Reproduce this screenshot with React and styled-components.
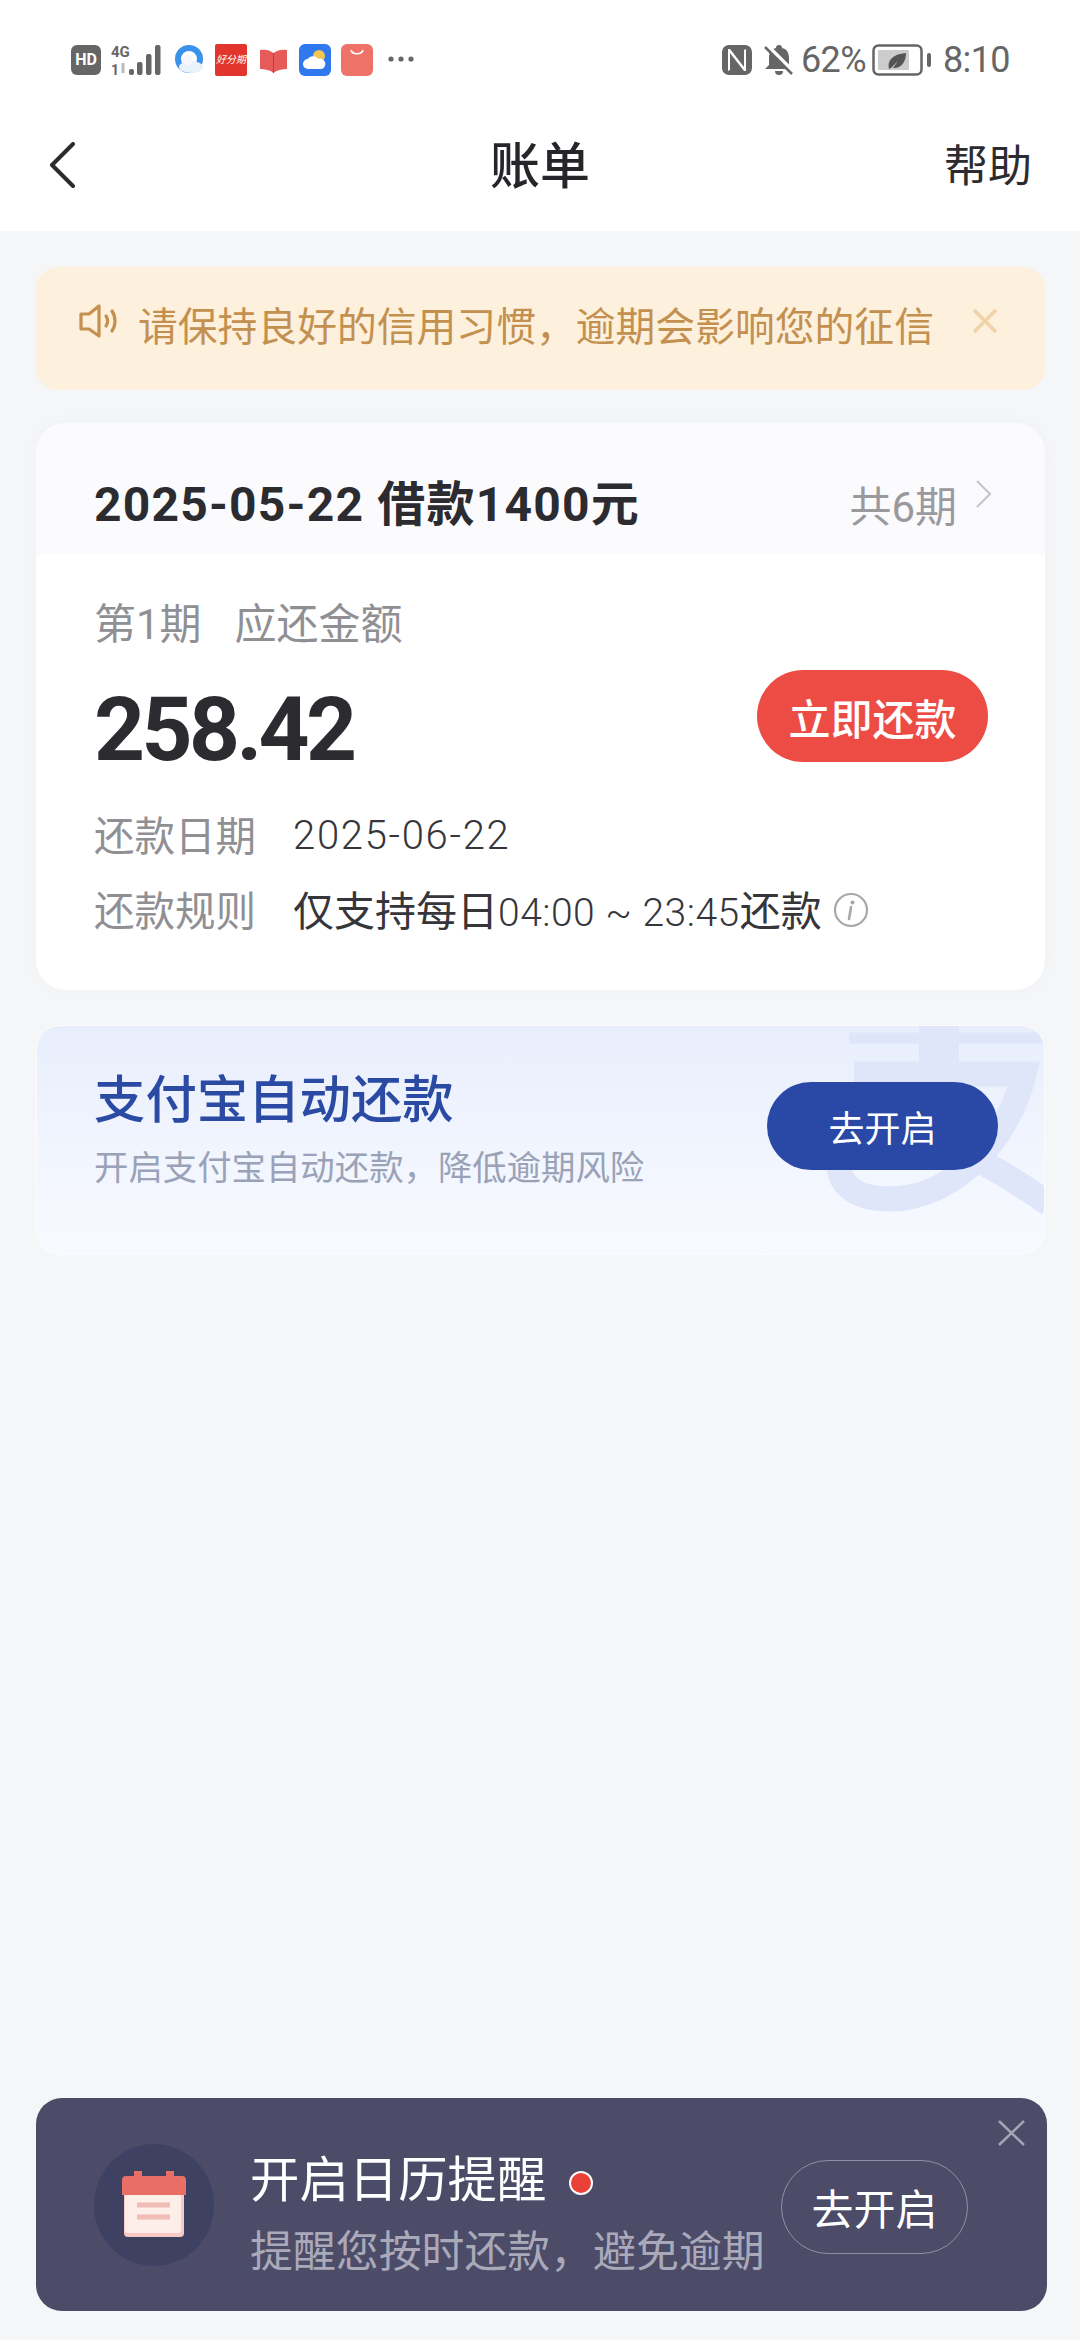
import React from "react";
import styled, { createGlobalStyle } from "styled-components";

const Global = createGlobalStyle`
  html, body { margin: 0; padding: 0; background: #f5f6f8; }
  * { box-sizing: border-box; }
`;
const CJK = `"Roboto", "Noto Sans CJK SC", sans-serif`;

const Page = styled.div`
  width: 1080px; height: 2340px; display: flex; flex-direction: column;
  background: #f5f6f8; font-family: ${CJK}; overflow: hidden;
`;
const Header = styled.header`background: #fff; height: 231px; display: flex; flex-direction: column;`;
const StatusBar = styled.div`
  height: 85px; padding: 44px 70px 0 71px; display: flex; justify-content: space-between; align-items: flex-start;
`;
const StatusGroup = styled.div`display: flex; align-items: center; height: 32px;`;
const StatusText = styled.span`
  font-size: 36px; line-height: 32px; color: #666; margin-left: ${p => p.$ml || 0}px; white-space: nowrap; letter-spacing: -.6px;
`;
const Svg = styled.svg`display: block; flex: none; margin-left: ${p => p.$ml || 0}px;`;
const HdBadge = styled.div`
  width: 30px; height: 30px; flex: none; border-radius: 6px; background: #666; color: #fff; font-size: 16px; font-weight: 700;
  line-height: 30px; text-align: center;
`;
const RedTile = styled.div`
  width: 32px; height: 32px; margin-left: 11px; background: #e2352c; color: #fff; font-size: 10px; font-style: italic;
  line-height: 32px; text-align: center; white-space: nowrap; overflow: hidden; border-radius: 2px;
`;
const Nav = styled.nav`
  flex: 1; display: flex; align-items: center; justify-content: space-between; padding: 18px 34px 0 48px; position: relative; margin-top: -1px;
`;
const BackIcon = styled.svg`margin-top: -4px;`;
const Title = styled.h1`
  position: absolute; left: 0; right: 0; margin: 0; text-align: center; font-size: 50px; font-weight: 500; color: #26262a; line-height: 70px;
`;
const Help = styled.span`font-size: 44px; color: #2b2b30; line-height: 60px; margin-right: 14px;`;

const Notice = styled.div`
  margin: 36px 35px 0 36px; height: 123px; border-radius: 22px; background: #fdf0dc; display: flex; align-items: flex-start;
  padding: 31px 47px 0 43px; color: #c4904f;
`;
const NoticeText = styled.span`
  font-size: 39.8px; line-height: 60px; margin-left: 19px; white-space: nowrap; flex: 1;
`;
const BillCard = styled.section`
  margin: 33px 35px 0 36px; height: 567px; border-radius: 30px; background: #fff; overflow: hidden; box-shadow: 0 0 20px rgba(30,30,60,.025);
`;
const BillHead = styled.div`
  height: 132px; background: #fbfbfd; display: flex; align-items: center; padding: 0 53px 0 58px; color: #2c2c30;
`;
const BillTitle = styled.div`font-size: 48px; font-weight: 700; flex: 1; white-space: nowrap; margin-top: 22px; letter-spacing: 1.2px;`;
const Periods = styled.span`font-size: 42px; color: #9a9a9e; margin-top: 28px;`;
const BillBody = styled.div`padding: 45px 57px 0 58px;`;
const Muted = styled.div`font-size: 42px; line-height: 50px; color: #909094; white-space: pre; word-spacing: 6px;`;
const AmountRow = styled.div`display: flex; justify-content: space-between; align-items: flex-start; margin-top: 20px;`;
const Amount = styled.div`font-size: 89px; font-weight: 700; line-height: 120px; height: 116px; color: #2c2c30; letter-spacing: -3.6px;`;
const PayButton = styled.button`
  width: 231px; height: 92px; border: 0; border-radius: 46px; background: #ed4c45; color: #fff; font: 500 42px ${CJK}; padding: 0;
`;
const InfoRow = styled.div`display: flex; align-items: center; height: 56px; margin-top: ${p => p.$mt}px;`;
const InfoLabel = styled.span`width: 199px; font-size: 40.5px; color: #909094; flex: none;`;
const InfoValue = styled.span`font-size: 41px; color: #36363a; white-space: pre;`;
const Digits = styled.span`font-size: 39px; font-weight: 300; letter-spacing: .5px; color: #36363a;`;
const DateDigits = styled(Digits)`font-size: 40px; letter-spacing: 1.7px; margin-top: 4px;`;

const AutoCard = styled.section`
  margin: 35px 35px 0 36px; height: 230px; border-radius: 24px; position: relative; overflow: hidden;
  background: linear-gradient(180deg, #e8eefc 0%, #f1f5fe 55%, #f8faff 100%); border: 1px solid #fbfcff;
  display: flex; justify-content: space-between; align-items: flex-start; padding: 43px 46px 0 57px;
`;
const Watermark = styled.svg`position: absolute; right: 0; top: 0;`;
const AutoText = styled.div`position: relative; display: flex; flex-direction: column;`;
const AutoTitle = styled.div`font-size: 51.4px; line-height: 64px; font-weight: 500; color: #2a4aa4; white-space: nowrap;`;
const AutoSub = styled.div`font-size: 34.4px; line-height: 40px; margin-top: 15px; color: #9aa2b8; white-space: nowrap;`;
const AutoButton = styled.button`
  position: relative; width: 231px; height: 88px; margin-top: 13px; border: 0; border-radius: 44px; background: #2a48a6; color: #fff;
  font: 400 36px ${CJK}; padding: 0;
`;

const Reminder = styled.section`
  margin: auto 33px 29px 36px; height: 213px; border-radius: 26px; background: #4c4b68; position: relative;
  display: flex; align-items: center; padding: 0 79px 0 58px;
`;
const IconCircle = styled.div`
  width: 120px; height: 122px; border-radius: 50%; background: #3f4163; display: flex; align-items: center; justify-content: center; flex: none;
`;
const RemindText = styled.div`margin-left: 36px; display: flex; flex-direction: column; margin-top: 16px;`;
const RemindTitle = styled.div`display: flex; align-items: center; font-size: 49.4px; line-height: 60px; color: #fff; white-space: nowrap;`;
const RedDot = styled.i`
  width: 24px; height: 24px; border-radius: 50%; background: #ea4038; border: 2px solid #fff; margin: 6px 0 0 23px; display: block;
`;
const RemindSub = styled.div`font-size: 42.9px; line-height: 48px; margin-top: 18px; color: #a9a9b9; white-space: nowrap;`;
const OutlineButton = styled.button`
  margin-left: auto; width: 187px; height: 94px; border-radius: 47px; border: 1px solid #8f8fa3; background: transparent; color: #fff;
  font: 400 42px ${CJK}; padding: 0; margin-top: 4px;
`;
const CloseCorner = styled.svg`position: absolute; top: 22px; right: 22px;`;

const Signal = () => (
  <Svg $ml={10} width="52" height="32" viewBox="0 0 52 32">
    <text x="0" y="13" fontFamily="Roboto" fontWeight="700" fontSize="15" fill="#666">4G</text>
    <text x="0" y="31" fontFamily="Roboto" fontWeight="700" fontSize="14" fill="#666">1</text>
    <path d="M12 19v10" stroke="#bbb" strokeWidth="3" />
    <g fill="#666">
      <rect x="18" y="25" width="5" height="6" rx="2" />
      <rect x="26" y="18" width="5.5" height="13" rx="2" />
      <rect x="35" y="10" width="5.5" height="21" rx="2" />
      <rect x="44" y="1" width="5.5" height="30" rx="2" />
    </g>
  </Svg>
);
const Browser = () => (
  <Svg $ml={11} width="30" height="32" viewBox="0 0 30 32">
    <circle cx="15" cy="15" r="11" fill="none" stroke="#3a92ea" strokeWidth="6" />
    <ellipse cx="17" cy="23" rx="12" ry="6" fill="#e9f1fb" />
    <circle cx="14" cy="16" r="5" fill="#f5f8fd" />
  </Svg>
);
const Book = () => (
  <Svg $ml={12} width="29" height="32" viewBox="0 0 29 32">
    <path d="M1 6c5-1 10 0 13.500 3C18 6 23 5 28 6v19c-5 0-10 1-13.500 4C11 26 6 25 1 25z" fill="#e75a5a" />
    <path d="M14.500 9v20" stroke="#b83c3c" strokeWidth="1" />
  </Svg>
);
const Weather = () => (
  <Svg $ml={11} width="32" height="32" viewBox="0 0 32 32">
    <rect width="32" height="32" rx="6" fill="#2f78ee" />
    <circle cx="20" cy="12" r="6" fill="#f3c654" />
    <path d="M9 25a5 5 0 0 1 0-10c1-3 8-4 10 0a5 5 0 0 1 4 10z" fill="#fff" />
  </Svg>
);
const Bag = () => (
  <Svg $ml={10} width="32" height="32" viewBox="0 0 32 32">
    <rect width="32" height="32" rx="6" fill="#ee7268" />
    <path d="M10 6c1 5 11 5 12 0" fill="none" stroke="#fff" strokeWidth="1.600" />
  </Svg>
);
const Dots = () => (
  <Svg $ml={15} width="26" height="32" viewBox="0 0 26 32">
    <g fill="#666"><circle cx="3" cy="15" r="2.600" /><circle cx="13" cy="15" r="2.600" /><circle cx="23" cy="15" r="2.600" /></g>
  </Svg>
);
const Nfc = () => (
  <Svg width="30" height="30" viewBox="0 0 30 30">
    <rect width="30" height="30" rx="7" fill="#666" />
    <path d="M6 4v22l2-1V8l14 18h2V4l-2 1v17L8 4z" fill="#fff" />
  </Svg>
);
const MutedBell = () => (
  <Svg $ml={12} width="30" height="32" viewBox="0 0 30 32">
    <path d="M15 1a3 3 0 0 1 3 3c5 1 7 5 7 10v7l4 4H1l4-4v-7c0-5 2-9 7-10a3 3 0 0 1 3-3z" fill="#666" />
    <path d="M11 27h8a4 4 0 0 1-8 0z" fill="#666" />
    <path d="M2 1l27 27" stroke="#fff" strokeWidth="5" />
    <path d="M1 3l27 27" stroke="#666" strokeWidth="2.500" />
  </Svg>
);
const Battery = () => (
  <Svg $ml={6} width="60" height="32" viewBox="0 0 60 32">
    <rect x="1.500" y="1.500" width="48" height="29" rx="5" fill="none" stroke="#666" strokeWidth="2.500" />
    <rect x="6" y="6" width="31" height="20" rx="1" fill="#ccc" />
    <path d="M17 25c-2-8 3-15 17-16 0 10-6 16-13 15l5-7-7 7z" fill="#555" />
    <rect x="55" y="9" width="4" height="14" rx="2" fill="#666" />
  </Svg>
);
const Speaker = () => (
  <svg width="40" height="34" viewBox="0 0 40 34" fill="none" stroke="currentColor" strokeWidth="3.200" strokeLinejoin="round" strokeLinecap="round" style={{ flex: "none", marginTop: 6 }}>
    <path d="M2 10h8L20 2v30l-10-7H2z" />
    <path d="M27 12c2 3 2 7 0 10" />
    <path d="M33 7c4 6 4 14 0 20" />
  </svg>
);

export default function App() {
  return (
    <Page>
      <Global />
      <Header>
        <StatusBar>
          <StatusGroup>
            <HdBadge>HD</HdBadge><Signal /><Browser />
            <RedTile>好分期</RedTile>
            <Book /><Weather /><Bag /><Dots />
          </StatusGroup>
          <StatusGroup>
            <Nfc /><MutedBell />
            <StatusText $ml={7}>62%</StatusText>
            <Battery />
            <StatusText $ml={11}>8:10</StatusText>
          </StatusGroup>
        </StatusBar>
        <Nav>
          <BackIcon width="28" height="46" viewBox="0 0 28 46" fill="none" stroke="#2b2b30" strokeWidth="4" strokeLinecap="round" strokeLinejoin="round">
            <path d="M25 2L4 23l21 21" />
          </BackIcon>
          <Title>账单</Title>
          <Help>帮助</Help>
        </Nav>
      </Header>

      <Notice>
        <Speaker />
        <NoticeText>请保持良好的信用习惯，逾期会影响您的征信</NoticeText>
        <svg width="26" height="26" viewBox="0 0 26 26" stroke="#f0d3a8" strokeWidth="3.500" style={{ marginTop: 10 }}>
          <path d="M2 2l22 22M24 2L2 24" />
        </svg>
      </Notice>

      <BillCard>
        <BillHead>
          <BillTitle>2025-05-22 借款1400元</BillTitle>
          <Periods>共6期</Periods>
          <svg width="17" height="28" viewBox="0 0 17 28" fill="none" stroke="#c4c4c8" strokeWidth="2" style={{ marginLeft: 18, marginTop: 10 }}>
            <path d="M2 1l13 13L2 27" />
          </svg>
        </BillHead>
        <BillBody>
          <Muted>第1期  应还金额</Muted>
          <AmountRow>
            <Amount>258.42</Amount>
            <PayButton>立即还款</PayButton>
          </AmountRow>
          <InfoRow $mt={19}>
            <InfoLabel>还款日期</InfoLabel>
            <DateDigits>2025-06-22</DateDigits>
          </InfoRow>
          <InfoRow $mt={19}>
            <InfoLabel>还款规则</InfoLabel>
            <InfoValue>仅支持每日<Digits>04:00 ~ 23:45</Digits>还款</InfoValue>
            <svg width="36" height="36" viewBox="0 0 36 36" style={{ marginLeft: 11, marginTop: 3 }}>
              <circle cx="18" cy="18" r="16" fill="none" stroke="#a8a8ac" strokeWidth="2.200" />
              <circle cx="19.500" cy="10.500" r="2" fill="#a8a8ac" />
              <path d="M18 15l-2 12" stroke="#a8a8ac" strokeWidth="2.600" strokeLinecap="round" />
            </svg>
          </InfoRow>
        </BillBody>
      </BillCard>

      <AutoCard>
        <Watermark width="230" height="190" viewBox="0 0 230 190" fill="none" stroke="#dfe6fa">
          <path d="M35 12h195" strokeWidth="11" />
          <path d="M125 0v50" strokeWidth="40" />
          <path d="M40 48h170c-15 65-70 125-135 125-30 0-50-12-50-35 0-25 30-38 70-30 45 10 90 35 140 70" strokeWidth="25" />
        </Watermark>
        <AutoText>
          <AutoTitle>支付宝自动还款</AutoTitle>
          <AutoSub>开启支付宝自动还款，降低逾期风险</AutoSub>
        </AutoText>
        <AutoButton>去开启</AutoButton>
      </AutoCard>

      <Reminder>
        <IconCircle>
          <svg width="64" height="68" viewBox="0 0 64 68">
            <rect x="2" y="12" width="60" height="54" rx="4" fill="#f8c9c5" />
            <rect x="3" y="12" width="56" height="50" rx="3" fill="#fdeeea" />
            <path d="M12 0h8v5h24V0h8v5h8a4 4 0 0 1 4 4v15H0V9a4 4 0 0 1 4-4h8z" fill="#e96f66" />
            <path d="M15 34h33M15 46h33" stroke="#f0bcb6" strokeWidth="5" />
          </svg>
        </IconCircle>
        <RemindText>
          <RemindTitle>开启日历提醒<RedDot /></RemindTitle>
          <RemindSub>提醒您按时还款，避免逾期</RemindSub>
        </RemindText>
        <OutlineButton>去开启</OutlineButton>
        <CloseCorner width="27" height="26" viewBox="0 0 27 26" stroke="#a4a4b4" strokeWidth="2.500">
          <path d="M1 1l25 24M26 1L1 25" />
        </CloseCorner>
      </Reminder>
    </Page>
  );
}
